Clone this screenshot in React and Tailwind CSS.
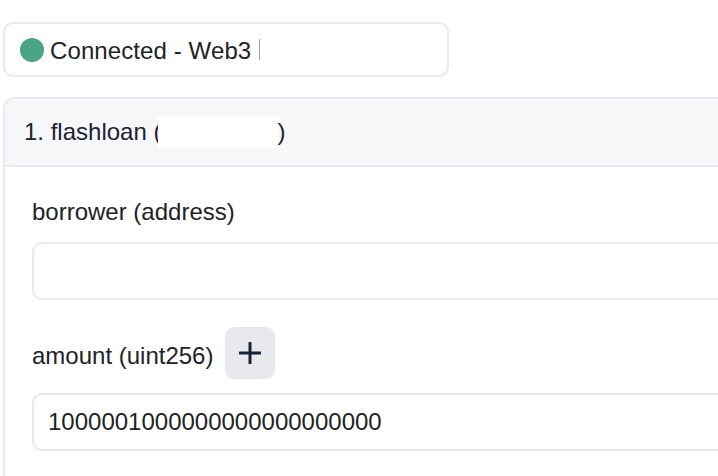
export default function App() {
  const font = { fontFamily: '"Liberation Sans", Arial, sans-serif' };
  return (
    <div className="w-[718px] h-[476px] overflow-hidden bg-white pl-[3px] pt-[22px] text-[24px] text-[#222226]" style={font}>
      <div className="flex h-[55px] w-[446px] items-center rounded-[10px] border-2 border-[#e9e9ef] pl-[15px]">
        <span className="h-[24px] w-[24px] rounded-full bg-[#4aa387]" />
        <span className="ml-[6px] mt-[2px] leading-[28px] tracking-[0.1px]">Connected - Web3</span>
        <span className="ml-[8px] h-[21px] w-px bg-[#a0a0a6]" />
      </div>

      <div className="mt-[20px] w-[900px] rounded-tl-[12px] border-2 border-[#e9e9ef]">
        <div className="flex h-[68px] items-center rounded-tl-[10px] border-b-2 border-[#e9e9ef] bg-[#f6f7f9] pl-[19px] text-[#1c2233]">
          <span className="leading-[28px]">1. flashloan (</span>
          <span className="-ml-[3px] h-[31px] w-[121px] bg-white" />
          <span className="-ml-[2px] leading-[28px]">)</span>
        </div>
        <div className="flex flex-col pl-[27px] pt-[31px] pb-[40px]">
          <label className="leading-[28px]">borrower (address)</label>
          <div className="mt-[16px] h-[58px] w-[800px] rounded-[10px] border-2 border-[#e9e9ef]" />
          <div className="mt-[27px] flex items-center">
            <span className="mt-[5px] leading-[28px]">amount (uint256)</span>
            <button className="ml-[12px] flex h-[52px] w-[50px] items-center justify-center rounded-[9px] bg-[#e8e9ef]">
              <svg width="22" height="22" viewBox="0 0 22 22">
                <path d="M11 1v20M1 11h20" stroke="#1a2138" strokeWidth="3" strokeLinecap="round" fill="none" />
              </svg>
            </button>
          </div>
          <div className="mt-[14px] flex h-[58px] w-[800px] items-center rounded-[10px] border-2 border-[#e9e9ef] pl-[14px]">
            <span className="leading-[28px]">1000001000000000000000000</span>
          </div>
        </div>
      </div>
    </div>
  );
}
